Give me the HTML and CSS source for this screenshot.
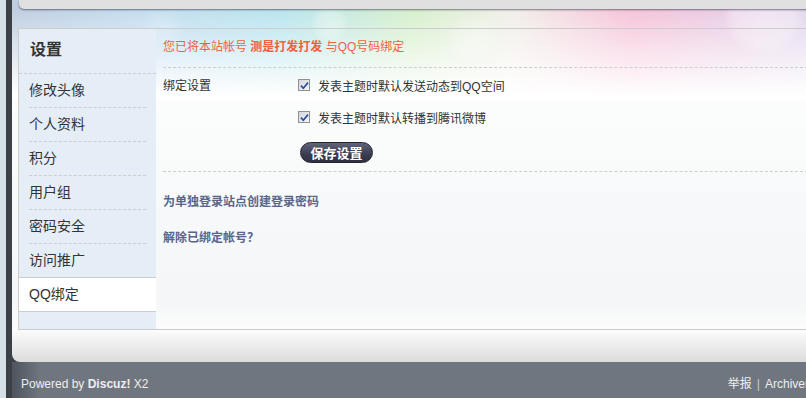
FILE: index.html
```html
<!DOCTYPE html>
<html lang="zh-CN">
<head>
    <meta charset="UTF-8">
    <meta name="viewport" content="width=device-width, initial-scale=1.0">
    <title>QQ绑定 - 设置</title>
    <link rel="stylesheet" href="styles.css">
</head>
<body>

<div class="page">
    <div class="wp">
        <div class="hd-bar"></div>

        <div class="ct">
            <div class="tbn">
                <h2>设置</h2>
                <ul>
                    <li><a href="#">修改头像</a></li>
                    <li><a href="#">个人资料</a></li>
                    <li><a href="#">积分</a></li>
                    <li><a href="#">用户组</a></li>
                    <li><a href="#">密码安全</a></li>
                    <li><a href="#">访问推广</a></li>
                    <li class="a"><a href="#">QQ绑定</a></li>
                </ul>
            </div>

            <div class="mn">
                <p class="bind-tip">您已将本站帐号 <strong>测是打发打发</strong> 与QQ号码绑定</p>

                <form class="bind-form" onsubmit="return false;">
                    <div class="bind-label">绑定设置</div>
                    <div class="bind-opts">
                        <label class="opt"><span class="cbox"><svg width="9" height="9" viewBox="0 0 9 9"><path d="M1 4.6L3.3 7.2L8 1.6" fill="none" stroke="#2b4ea5" stroke-width="1.7"/></svg></span>发表主题时默认发送动态到QQ空间</label>
                        <label class="opt"><span class="cbox"><svg width="9" height="9" viewBox="0 0 9 9"><path d="M1 4.6L3.3 7.2L8 1.6" fill="none" stroke="#2b4ea5" stroke-width="1.7"/></svg></span>发表主题时默认转播到腾讯微博</label>
                        <button type="submit" class="pn">保存设置</button>
                    </div>
                </form>

                <div class="bind-links">
                    <p><a href="#">为单独登录站点创建登录密码</a></p>
                    <p><a href="#">解除已绑定帐号？</a></p>
                </div>
            </div>
        </div>
    </div>

    <div class="ft">
        <p>Powered by <strong>Discuz!</strong> X2</p>
        <p class="ft-links"><a href="#">举报</a><span class="pipe">|</span><a href="#">Archiver</a></p>
    </div>
</div>

</body>
</html>
```

FILE: styles.css
```css
html, body {
    overflow: hidden;
}
body {
    margin: 0;
    background-color: #d4e1e7;
    font-family: "Liberation Sans", "Noto Sans CJK SC", sans-serif;
    font-size: 12px;
    color: #333;
}
a {
    color: #333;
    text-decoration: none;
}
.page {
    margin-left: 6px;
    padding-left: 6px;
    width: 806px;
    height: 398px;
    background-color: #3c4148;
}
.wp {
    padding-bottom: 32px;
    border-bottom-left-radius: 8px;
    background:
        radial-gradient(circle at 318px 24px, rgba(255, 255, 255, 0.35) 0, rgba(255, 255, 255, 0.25) 12px, transparent 20px),
        radial-gradient(circle at 460px 40px, rgba(255, 255, 255, 0.3) 0, rgba(255, 255, 255, 0.2) 16px, transparent 26px),
        radial-gradient(circle at 752px 14px, rgba(255, 255, 255, 0.4) 0, rgba(255, 255, 255, 0.3) 30px, transparent 42px),
        radial-gradient(circle at 150px 30px, rgba(255, 255, 255, 0.25) 0, transparent 24px),
        linear-gradient(to bottom, rgba(255, 255, 255, 0) 8px, rgba(255, 255, 255, 0.5) 50px, #fff 96px) 0 0 / 100% 100px no-repeat,
        linear-gradient(to right, #bfcde0 0, #c3dcef 130px, #b7e4ee 270px, #d6efcb 400px, #f1efe9 500px, #f6c2d8 620px, #ebcbe2 700px, #e2d6ec 794px) 0 0 / 100% 100px no-repeat,
        linear-gradient(to bottom, #fff 0, #f4f6f7 300px, #fcfcfc 330px, #dcdcdc 100%);
}
.hd-bar {
    height: 9px;
    margin-left: 7px;
    background-color: #e0e0e0;
    border-bottom-left-radius: 5px;
    box-shadow: 0 1px 2px rgba(40, 40, 60, 0.6);
}
.ct {
    display: flex;
    margin: 19px 0 0 6px;
    height: 300px;
    border: 1px solid #ccc;
    border-right: none;
}
.tbn {
    width: 137px;
    flex-shrink: 0;
    background-color: #e5eef6;
}
.tbn h2 {
    margin: 0;
    padding: 0 11px;
    height: 44px;
    line-height: 42px;
    font-size: 16px;
    font-weight: bold;
    border-bottom: 1px dashed #cdcdcd;
}
.tbn ul {
    list-style: none;
    margin: 0;
    padding: 0;
}
.tbn li {
    margin: 0 10px;
    height: 33px;
    border-bottom: 1px dashed #cdcdcd;
}
.tbn li a {
    display: block;
    height: 33px;
    line-height: 32px;
    font-size: 14px;
}
.tbn li.a {
    margin: -1px 0 0;
    padding-left: 10px;
    background-color: #fff;
    border-top: 1px solid #cdcdcd;
    border-bottom: 1px solid #cdcdcd;
}
.mn {
    flex: 1;
    padding-left: 7px;
}
.bind-tip {
    margin: 0;
    padding: 11px 0 13px;
    line-height: 14px;
    color: #f0613f;
    border-bottom: 1px dashed #cdcdcd;
}
.bind-form {
    display: grid;
    grid-template-columns: 135px 1fr;
    padding: 10px 0 8px;
    border-bottom: 1px dashed #cdcdcd;
}
.bind-label {
    line-height: 17px;
}
.opt {
    display: flex;
    align-items: center;
    height: 14px;
    margin-bottom: 18px;
}
.cbox {
    display: flex;
    align-items: center;
    justify-content: center;
    box-sizing: border-box;
    width: 12px;
    height: 12px;
    margin-right: 8px;
    border: 1px solid #8f9194;
    background: linear-gradient(135deg, #d4d6da, #f6f6f6);
}
.pn {
    width: 73px;
    height: 21px;
    padding: 0;
    margin-left: 2px;
    border: 1px solid #23242e;
    border-radius: 11px;
    background: linear-gradient(to bottom, #60637a, #3a3c50 60%, #2e3042);
    color: #fff;
    font-family: "Noto Sans CJK SC", sans-serif;
    font-size: 13px;
    font-weight: bold;
    line-height: 18px;
    cursor: pointer;
}
.bind-links {
    padding-top: 23px;
}
.bind-links p {
    margin: 0 0 22px;
    line-height: 14px;
}
.bind-links a {
    color: #58668a;
    font-weight: bold;
}
.ft {
    display: flex;
    justify-content: space-between;
    height: 36px;
    padding: 14px 9px 0;
    background: linear-gradient(to right, #4e545d, #70767f 28px);
    color: #eee;
}
.ft p {
    margin: 0;
    line-height: 16px;
}
.ft a {
    color: #eee;
}
.ft-links .pipe {
    margin: 0 5px;
    color: #c8ccd2;
}
```
